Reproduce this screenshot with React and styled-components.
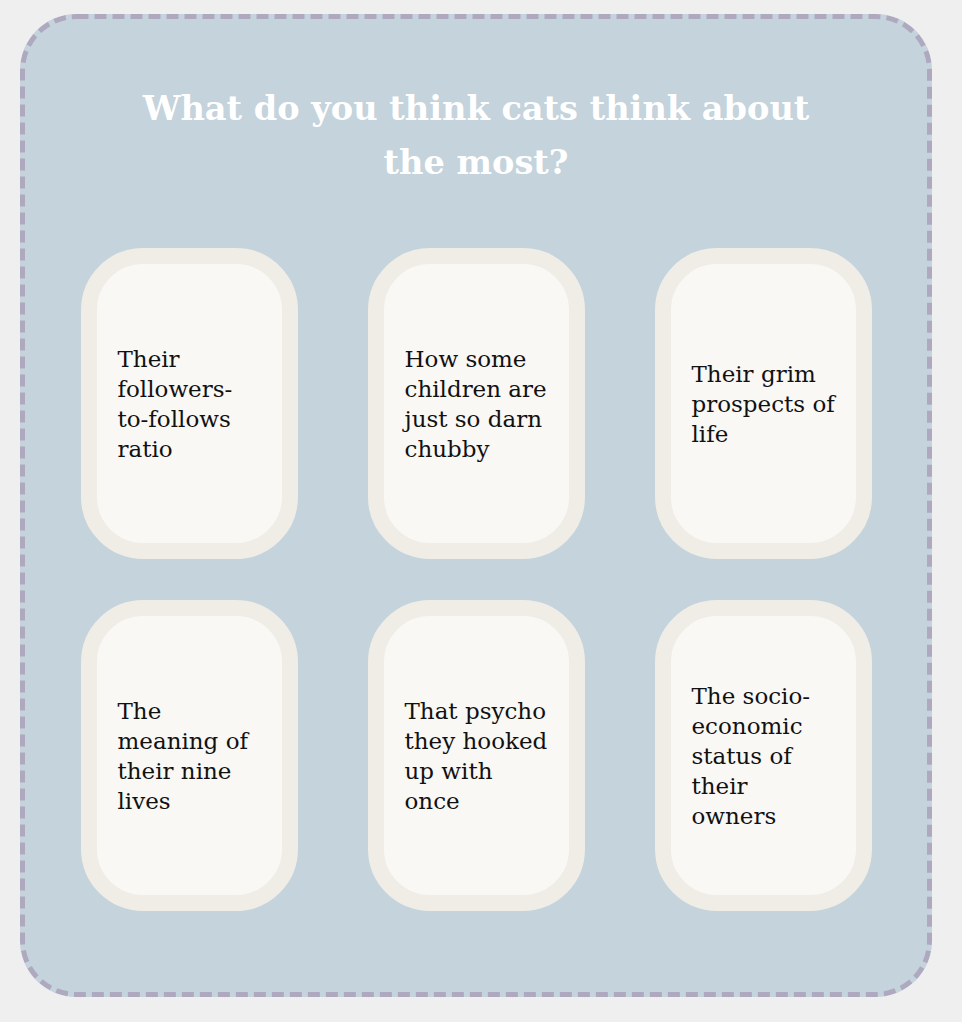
import React from 'react'
import styled, { createGlobalStyle } from 'styled-components'

const GlobalStyle = createGlobalStyle`
  body {
    margin: 0;
    background: #efefef;
    font-family: "DejaVu Serif", "Liberation Serif", serif;
  }
`

const answers = [
  'Their followers-to-follows ratio',
  'How some children are just so darn chubby',
  'Their grim prospects of life',
  'The meaning of their nine lives',
  'That psycho they hooked up with once',
  'The socio-economic status of their owners',
]

// dashed frame drawn as an svg background so the dash length matches
const frame = encodeURIComponent(
  `<svg xmlns="http://www.w3.org/2000/svg" width="912" height="983"><rect x="2.5" y="2.5" width="907" height="978" rx="54" fill="none" stroke="#afa9c0" stroke-width="5" stroke-dasharray="12 6"/></svg>`
)

const Page = styled.div`
  padding: 14px 30px 25px 20px;
`

const Board = styled.section`
  box-sizing: border-box;
  width: 912px;
  height: 983px;
  background-color: #c4d3dc;
  background-image: url("data:image/svg+xml,${frame}");
  border-radius: 56px;
  padding: 67px 60px 0;
  display: flex;
  flex-direction: column;
  align-items: center;
`

const Question = styled.h1`
  margin: 0 0 59px;
  max-width: 710px;
  color: #fff;
  font-size: 33.6px;
  line-height: 54px;
  font-weight: bold;
  text-align: center;
`

const Grid = styled.div`
  display: grid;
  grid-template-columns: repeat(3, 217px);
  column-gap: 70px;
  row-gap: 41px;
`

const Card = styled.div`
  box-sizing: border-box;
  height: 311px;
  border: 16px solid #efede5;
  border-radius: 62px;
  background: #f9f8f5;
  padding: 0 19px 0 21px;
  display: flex;
  align-items: center;
`

const Answer = styled.p`
  margin: 0;
  color: #111;
  font-size: 23px;
  line-height: 30px;
`

export default function App() {
  return (
    <Page>
      <GlobalStyle />
      <Board>
        <Question>What do you think cats think about the most?</Question>
        <Grid>
          {answers.map((a) => (
            <Card key={a}>
              <Answer>{a}</Answer>
            </Card>
          ))}
        </Grid>
      </Board>
    </Page>
  )
}
